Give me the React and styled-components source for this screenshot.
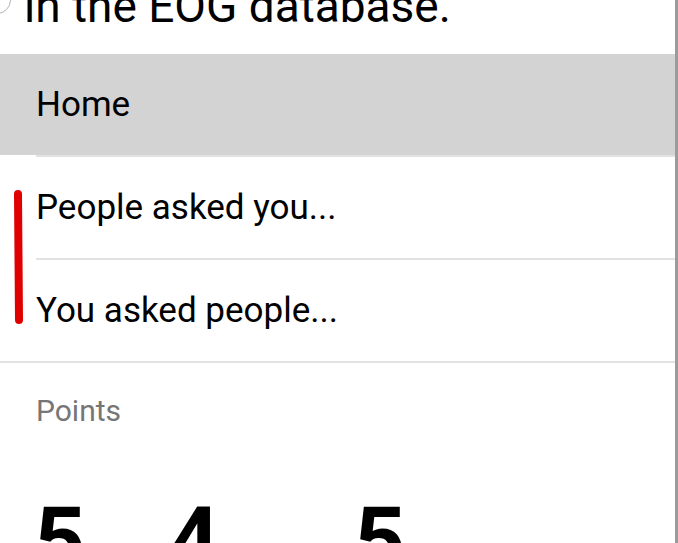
import React from "react";
import styled, { createGlobalStyle } from "styled-components";

const GlobalStyle = createGlobalStyle`
  html, body {
    margin: 0;
    padding: 0;
    background: #ffffff;
    overflow: hidden;
  }
  body {
    font-family: Roboto, "Liberation Sans", sans-serif;
    color: #000000;
  }
`;

const Screen = styled.div`
  width: 675px;
  height: 543px;
  border-right: 3px solid #9b9b9b;
  overflow: hidden;
  position: relative;
  background: #ffffff;
`;

const Header = styled.div`
  position: relative;
  height: 54px;
  overflow: hidden;
`;

const Avatar = styled.span`
  position: absolute;
  left: -17px;
  top: -14px;
  width: 26px;
  height: 26px;
  border: 1px solid #b4b4b4;
  border-radius: 50%;
`;

const Title = styled.h1`
  margin: -17px 0 0 24px;
  font-size: 46px;
  line-height: 46px;
  font-weight: 400;
  white-space: nowrap;
`;

const Menu = styled.nav`
  display: flex;
  flex-direction: column;
  position: relative;
`;

const MenuItem = styled.div`
  height: 101px;
  display: flex;
  align-items: center;
  padding-left: 36px;
  font-size: 35px;
  background: ${(p) => (p.$active ? "#d3d3d3" : "#ffffff")};
`;

const Divider = styled.div`
  height: 2px;
  margin-left: ${(p) => (p.$inset ? "36px" : "0")};
  background: #e2e2e2;
`;

const Marker = styled.svg`
  position: absolute;
  left: 10px;
  top: 135px;
  width: 18px;
  height: 140px;
  filter: blur(0.6px);
`;

const Stats = styled.section`
  padding: 30px 0 0 36px;
`;

const Label = styled.div`
  font-size: 30px;
  line-height: 36px;
  color: #767676;
`;

const Numbers = styled.div`
  display: flex;
  margin-top: 67px;
`;

const Number = styled.div`
  width: ${(p) => p.$w}px;
  font-size: 90px;
  line-height: 90px;
  font-weight: 700;
  margin-left: -2px;
`;

const stats = [
  { value: 5, w: 136 },
  { value: 4, w: 188 },
  { value: 5, w: 140 },
];

export default function App() {
  return (
    <>
      <GlobalStyle />
      <Screen>
        <Header>
          <Avatar />
          <Title>in the EOG database.</Title>
        </Header>
        <Menu>
          <MenuItem $active>Home</MenuItem>
          <Divider $inset />
          <MenuItem>People asked you...</MenuItem>
          <Divider $inset />
          <MenuItem>You asked people...</MenuItem>
          <Divider />
          <Marker viewBox="0 0 18 140">
            <path
              d="M8 5 L9 131"
              stroke="#e00000"
              strokeWidth="8"
              strokeLinecap="round"
              fill="none"
            />
          </Marker>
        </Menu>
        <Stats>
          <Label>Points</Label>
          <Numbers>
            {stats.map((s, i) => (
              <Number key={i} $w={s.w}>
                {s.value}
              </Number>
            ))}
          </Numbers>
        </Stats>
      </Screen>
    </>
  );
}
